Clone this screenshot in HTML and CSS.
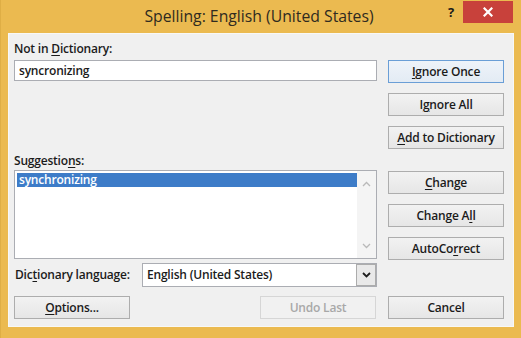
FILE: index.html
```html
<!DOCTYPE html>
<html>
<head>
<meta charset="utf-8">
<link rel="stylesheet" href="styles.css">
</head>
<body>
<div class="window">
  <div class="titlebar">
    <div class="title">Spelling: English (United States)</div>
    <div class="help">?</div>
    <div class="close">
      <svg width="10" height="10" viewBox="0 0 10 10"><path d="M1.5 1.5 L8.5 8.5 M8.5 1.5 L1.5 8.5" stroke="#fff" stroke-width="2.2" stroke-linecap="square"/></svg>
    </div>
  </div>
  <div class="panel">
    <div class="left">
      <div class="label first">Not in <u>D</u>ictionary:</div>
      <div class="field">syncronizing</div>
      <div class="label second">Suggestio<u>n</u>s:</div>
      <div class="list">
        <div class="items">
          <div class="item sel">synchronizing</div>
        </div>
        <div class="scroll">
          <svg width="9" height="6" viewBox="0 0 9 6"><path d="M1 5 L4.5 1.5 L8 5" fill="none" stroke="#b9b9b9" stroke-width="1.3"/></svg>
          <svg width="9" height="6" viewBox="0 0 9 6"><path d="M1 1 L4.5 4.5 L8 1" fill="none" stroke="#b9b9b9" stroke-width="1.3"/></svg>
        </div>
      </div>
      <div class="langrow">
        <div class="langlabel">Dic<u>t</u>ionary language:</div>
        <div class="combo">
          <div class="combotext">English (United States)</div>
          <div class="combobtn">
            <svg width="9" height="6" viewBox="0 0 9 6"><path d="M1 1 L4.5 4.5 L8 1" fill="none" stroke="#1e1e1e" stroke-width="1.8"/></svg>
          </div>
        </div>
      </div>
      <div class="bottomrow">
        <div class="btn"><u>O</u>ptions...</div>
        <div class="btn disabled">Undo Last</div>
      </div>
    </div>
    <div class="right">
      <div class="btn default"><u>I</u>gnore Once</div>
      <div class="btn">I<u>g</u>nore All</div>
      <div class="btn"><u>A</u>dd to Dictionary</div>
      <div class="btn group"><u>C</u>hange</div>
      <div class="btn">Change A<u>l</u>l</div>
      <div class="btn">AutoCo<u>r</u>rect</div>
      <div class="btn cancel">Cancel</div>
    </div>
  </div>
</div>
</body>
</html>
```
FILE: styles.css
```css
* { box-sizing: border-box; }
html, body { margin: 0; padding: 0; }
body {
  width: 521px;
  height: 338px;
  overflow: hidden;
  font-family: "Open Sans", "Noto Sans", sans-serif;
  font-size: 12px;
  color: #1b1b1b;
}
u { text-decoration: underline; text-underline-offset: 2px; text-decoration-thickness: 1px; }
.window {
  width: 521px;
  height: 338px;
  background: #ebba50;
  display: flex;
  flex-direction: column;
  border-left: 1px solid #dfae45;
}
.titlebar {
  height: 33px;
  position: relative;
  display: flex;
  justify-content: center;
}
.title {
  font-size: 15.75px;
  line-height: 33px;
  color: #2f2a20;
  padding-right: 4px;
}
.help {
  position: absolute;
  left: 447px;
  top: 3px;
  font-weight: 700;
  font-size: 13px;
  line-height: 18px;
  color: #1a1a1a;
}
.close {
  position: absolute;
  left: 462px;
  top: 1px;
  width: 50px;
  height: 22px;
  background: #c8413b;
  display: flex;
  align-items: center;
  justify-content: center;
}
.panel {
  margin: 0 7px 0 7px;
  height: 294px;
  background: #f0f0f0;
  border: 1px solid #f8f8f6;
  display: flex;
  padding: 0 8px 7px 5px;
  gap: 11px;
  font-weight: 600;
  letter-spacing: -0.2px;
}
.left {
  width: 363px;
  display: flex;
  flex-direction: column;
}
.right {
  width: 116px;
  display: flex;
  flex-direction: column;
  padding-top: 26px;
  gap: 10px;
}
.label { line-height: 16px; }
.label.first { height: 26px; padding-top: 7px; }
.label.second { margin-top: 71px; height: 18px; padding-top: 1px; }
.field {
  height: 21px;
  background: #fff;
  border: 1px solid #abadb3;
  padding-left: 4px;
  line-height: 19px;
}
.list {
  height: 89px;
  background: #fff;
  border: 1px solid #abadb3;
  display: flex;
}
.items { flex: 1; padding: 2px 0 0 2px; }
.item { height: 14px; line-height: 14px; padding-left: 2px; }
.item.sel { background: #3d7cc8; color: #fff; }
.scroll {
  width: 19px;
  background: #f4f4f4;
  display: flex;
  flex-direction: column;
  justify-content: space-between;
  align-items: center;
  padding: 10px 0 9px;
}
.langrow {
  margin-top: 4px;
  height: 24px;
  display: flex;
  align-items: stretch;
}
.langlabel { width: 128px; line-height: 24px; padding-left: 1px; }
.combo {
  flex: 1;
  background: #fff;
  border: 1px solid #abadb3;
  display: flex;
}
.combotext { flex: 1; line-height: 22px; padding-left: 4px; }
.combobtn {
  width: 20px;
  background: #e9e9e9;
  border: 1px solid #acacac;
  margin: 0;
  display: flex;
  align-items: center;
  justify-content: center;
}
.bottomrow {
  margin-top: 9px;
  display: flex;
  justify-content: space-between;
  padding-right: 1px;
}
.btn {
  width: 116px;
  height: 23px;
  border: 1px solid #adadad;
  background: linear-gradient(#f2f2f2, #e6e6e6);
  text-align: center;
  line-height: 21px;
  color: #1b1b1b;
}
.btn.default { border-color: #6a9ed6; background: linear-gradient(#eef3f9, #e3ebf4); }
.btn.group { margin-top: 12px; }
.btn.cancel { margin-top: auto; }
.btn.disabled { color: #a8a8a8; border-color: #d6d6d6; background: #f1f1f1; }
```
